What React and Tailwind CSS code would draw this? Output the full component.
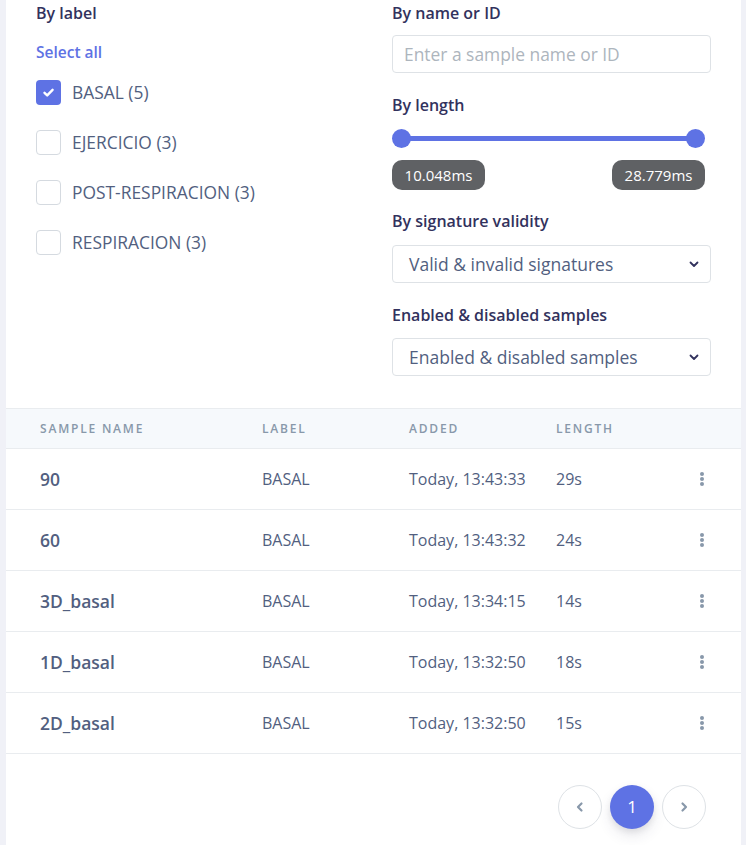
import React from 'react'

const labels = [
  { name: 'BASAL (5)', checked: true },
  { name: 'EJERCICIO (3)', checked: false },
  { name: 'POST-RESPIRACION (3)', checked: false },
  { name: 'RESPIRACION (3)', checked: false },
]

const samples = [
  { name: '90', label: 'BASAL', added: 'Today, 13:43:33', length: '29s' },
  { name: '60', label: 'BASAL', added: 'Today, 13:43:32', length: '24s' },
  { name: '3D_basal', label: 'BASAL', added: 'Today, 13:34:15', length: '14s' },
  { name: '1D_basal', label: 'BASAL', added: 'Today, 13:32:50', length: '18s' },
  { name: '2D_basal', label: 'BASAL', added: 'Today, 13:32:50', length: '15s' },
]

function Chevron() {
  return (
    <svg width="12" height="12" viewBox="0 0 12 12" className="text-[#32325d]">
      <path d="M2.5 4.5 6 8l3.5-3.5" fill="none" stroke="currentColor" strokeWidth="1.8" strokeLinecap="round" strokeLinejoin="round" />
    </svg>
  )
}

function Select({ value }) {
  return (
    <div className="h-[38px] rounded-[4px] border border-[#dee2e6] bg-white flex items-center justify-between pl-4 pr-[10px] text-[17.5px] text-[#525f7f]">
      <span>{value}</span>
      <Chevron />
    </div>
  )
}

function Dots() {
  return (
    <div className="flex flex-col gap-[1px]">
      <span className="w-[4px] h-[4px] rounded-full bg-[#8898aa]" />
      <span className="w-[4px] h-[4px] rounded-full bg-[#8898aa]" />
      <span className="w-[4px] h-[4px] rounded-full bg-[#8898aa]" />
    </div>
  )
}

export default function App() {
  return (
    <div className="min-h-[845px] bg-[#f0f1f7] pl-[6px] pr-[5px]" style={{ fontFamily: '"Open Sans", "Liberation Sans", sans-serif' }}>
      <div className="bg-white min-h-[845px]">
        {/* filters */}
        <div className="grid grid-cols-[326px_319px] gap-x-[30px] px-[30px] pt-[2px] pb-[32px]">
          <div>
            <div className="h-[22px] leading-[22px] text-[16px] font-semibold text-[#32325d]">By label</div>
            <div className="mt-[18px] h-[20px] leading-[20px] text-[15.5px] font-semibold text-[#5e72e4]">Select all</div>
            <div className="mt-[18px] flex flex-col gap-[25px]">
              {labels.map((l) => (
                <div key={l.name} className="flex items-center gap-[11px] h-[25px]">
                  {l.checked ? (
                    <span className="w-[25px] h-[25px] rounded-[4px] bg-[#5e72e4] flex items-center justify-center">
                      <svg width="13" height="13" viewBox="0 0 13 13">
                        <path d="M2.5 6.8 5.2 9.4 10.6 3.8" fill="none" stroke="white" strokeWidth="2.4" strokeLinecap="round" strokeLinejoin="round" />
                      </svg>
                    </span>
                  ) : (
                    <span className="w-[25px] h-[25px] rounded-[4px] border border-[#d5dae0] bg-white" />
                  )}
                  <span className="text-[17.4px] leading-[25px] text-[#525f7f]">{l.name}</span>
                </div>
              ))}
            </div>
          </div>
          <div>
            <div className="h-[22px] leading-[22px] text-[16px] font-semibold text-[#32325d]">By name or ID</div>
            <div className="mt-[11px] h-[38px] rounded-[4px] border border-[#dee2e6] flex items-center px-[11px] text-[17.4px] text-[#adb5bd]">
              Enter a sample name or ID
            </div>
            <div className="mt-[21px] h-[22px] leading-[22px] text-[16px] font-semibold text-[#32325d]">By length</div>
            <div className="mt-[13px] relative h-[19px] mr-[6px]">
              <div className="absolute left-[9px] right-[9px] top-[7px] h-[5px] bg-[#5e72e4]" />
              <span className="absolute left-0 top-0 w-[19px] h-[19px] rounded-full bg-[#5e72e4]" />
              <span className="absolute right-0 top-0 w-[19px] h-[19px] rounded-full bg-[#5e72e4]" />
            </div>
            <div className="mt-[12px] flex justify-between mr-[6px]">
              <span className="w-[93px] h-[30px] rounded-[10px] bg-[#5f6164] text-white text-[15px] flex items-center justify-center">10.048ms</span>
              <span className="w-[93px] h-[30px] rounded-[10px] bg-[#5f6164] text-white text-[15px] flex items-center justify-center">28.779ms</span>
            </div>
            <div className="mt-[20px] h-[22px] leading-[22px] text-[16px] font-semibold text-[#32325d]">By signature validity</div>
            <div className="mt-[13px]">
              <Select value="Valid & invalid signatures" />
            </div>
            <div className="mt-[21px] h-[22px] leading-[22px] text-[16px] font-semibold text-[#32325d]">Enabled &amp; disabled samples</div>
            <div className="mt-[12px]">
              <Select value="Enabled & disabled samples" />
            </div>
          </div>
        </div>

        {/* table */}
        <div className="border-t border-[#e9ecef]">
          <div className="h-[40px] bg-[#f6f9fc] border-b border-[#e9ecef] flex items-center pl-[34px] text-[12px] font-semibold tracking-[1.8px] uppercase text-[#8898aa]">
            <div className="w-[222px]">Sample name</div>
            <div className="w-[147px]">Label</div>
            <div className="w-[147px]">Added</div>
            <div className="flex-1">Length</div>
          </div>
          {samples.map((s) => (
            <div key={s.name} className="h-[61px] border-b border-[#e9ecef] flex items-center pl-[34px] pr-[37px] text-[#525f7f]">
              <div className="w-[222px] text-[17.5px] font-semibold">{s.name}</div>
              <div className="w-[147px] text-[16px]">{s.label}</div>
              <div className="w-[147px] text-[16px]">{s.added}</div>
              <div className="flex-1 text-[16px]">{s.length}</div>
              <Dots />
            </div>
          ))}
        </div>

        {/* pagination */}
        <div className="flex justify-end gap-[8px] pt-[31px] pr-[35px]">
          <button className="w-[44px] h-[44px] rounded-full border border-[#dee2e6] bg-white flex items-center justify-center text-[#8898aa]">
            <svg width="12" height="12" viewBox="0 0 12 12">
              <path d="M7.5 2.5 4 6l3.5 3.5" fill="none" stroke="currentColor" strokeWidth="2.2" strokeLinecap="round" strokeLinejoin="round" />
            </svg>
          </button>
          <button className="w-[44px] h-[44px] rounded-full bg-[#5e72e4] text-white text-[17px] flex items-center justify-center shadow-[0_7px_14px_rgba(50,50,93,0.1),0_3px_6px_rgba(0,0,0,0.08)]">
            1
          </button>
          <button className="w-[44px] h-[44px] rounded-full border border-[#dee2e6] bg-white flex items-center justify-center text-[#8898aa]">
            <svg width="12" height="12" viewBox="0 0 12 12">
              <path d="M4.5 2.5 8 6l-3.5 3.5" fill="none" stroke="currentColor" strokeWidth="2.2" strokeLinecap="round" strokeLinejoin="round" />
            </svg>
          </button>
        </div>
      </div>
    </div>
  )
}
